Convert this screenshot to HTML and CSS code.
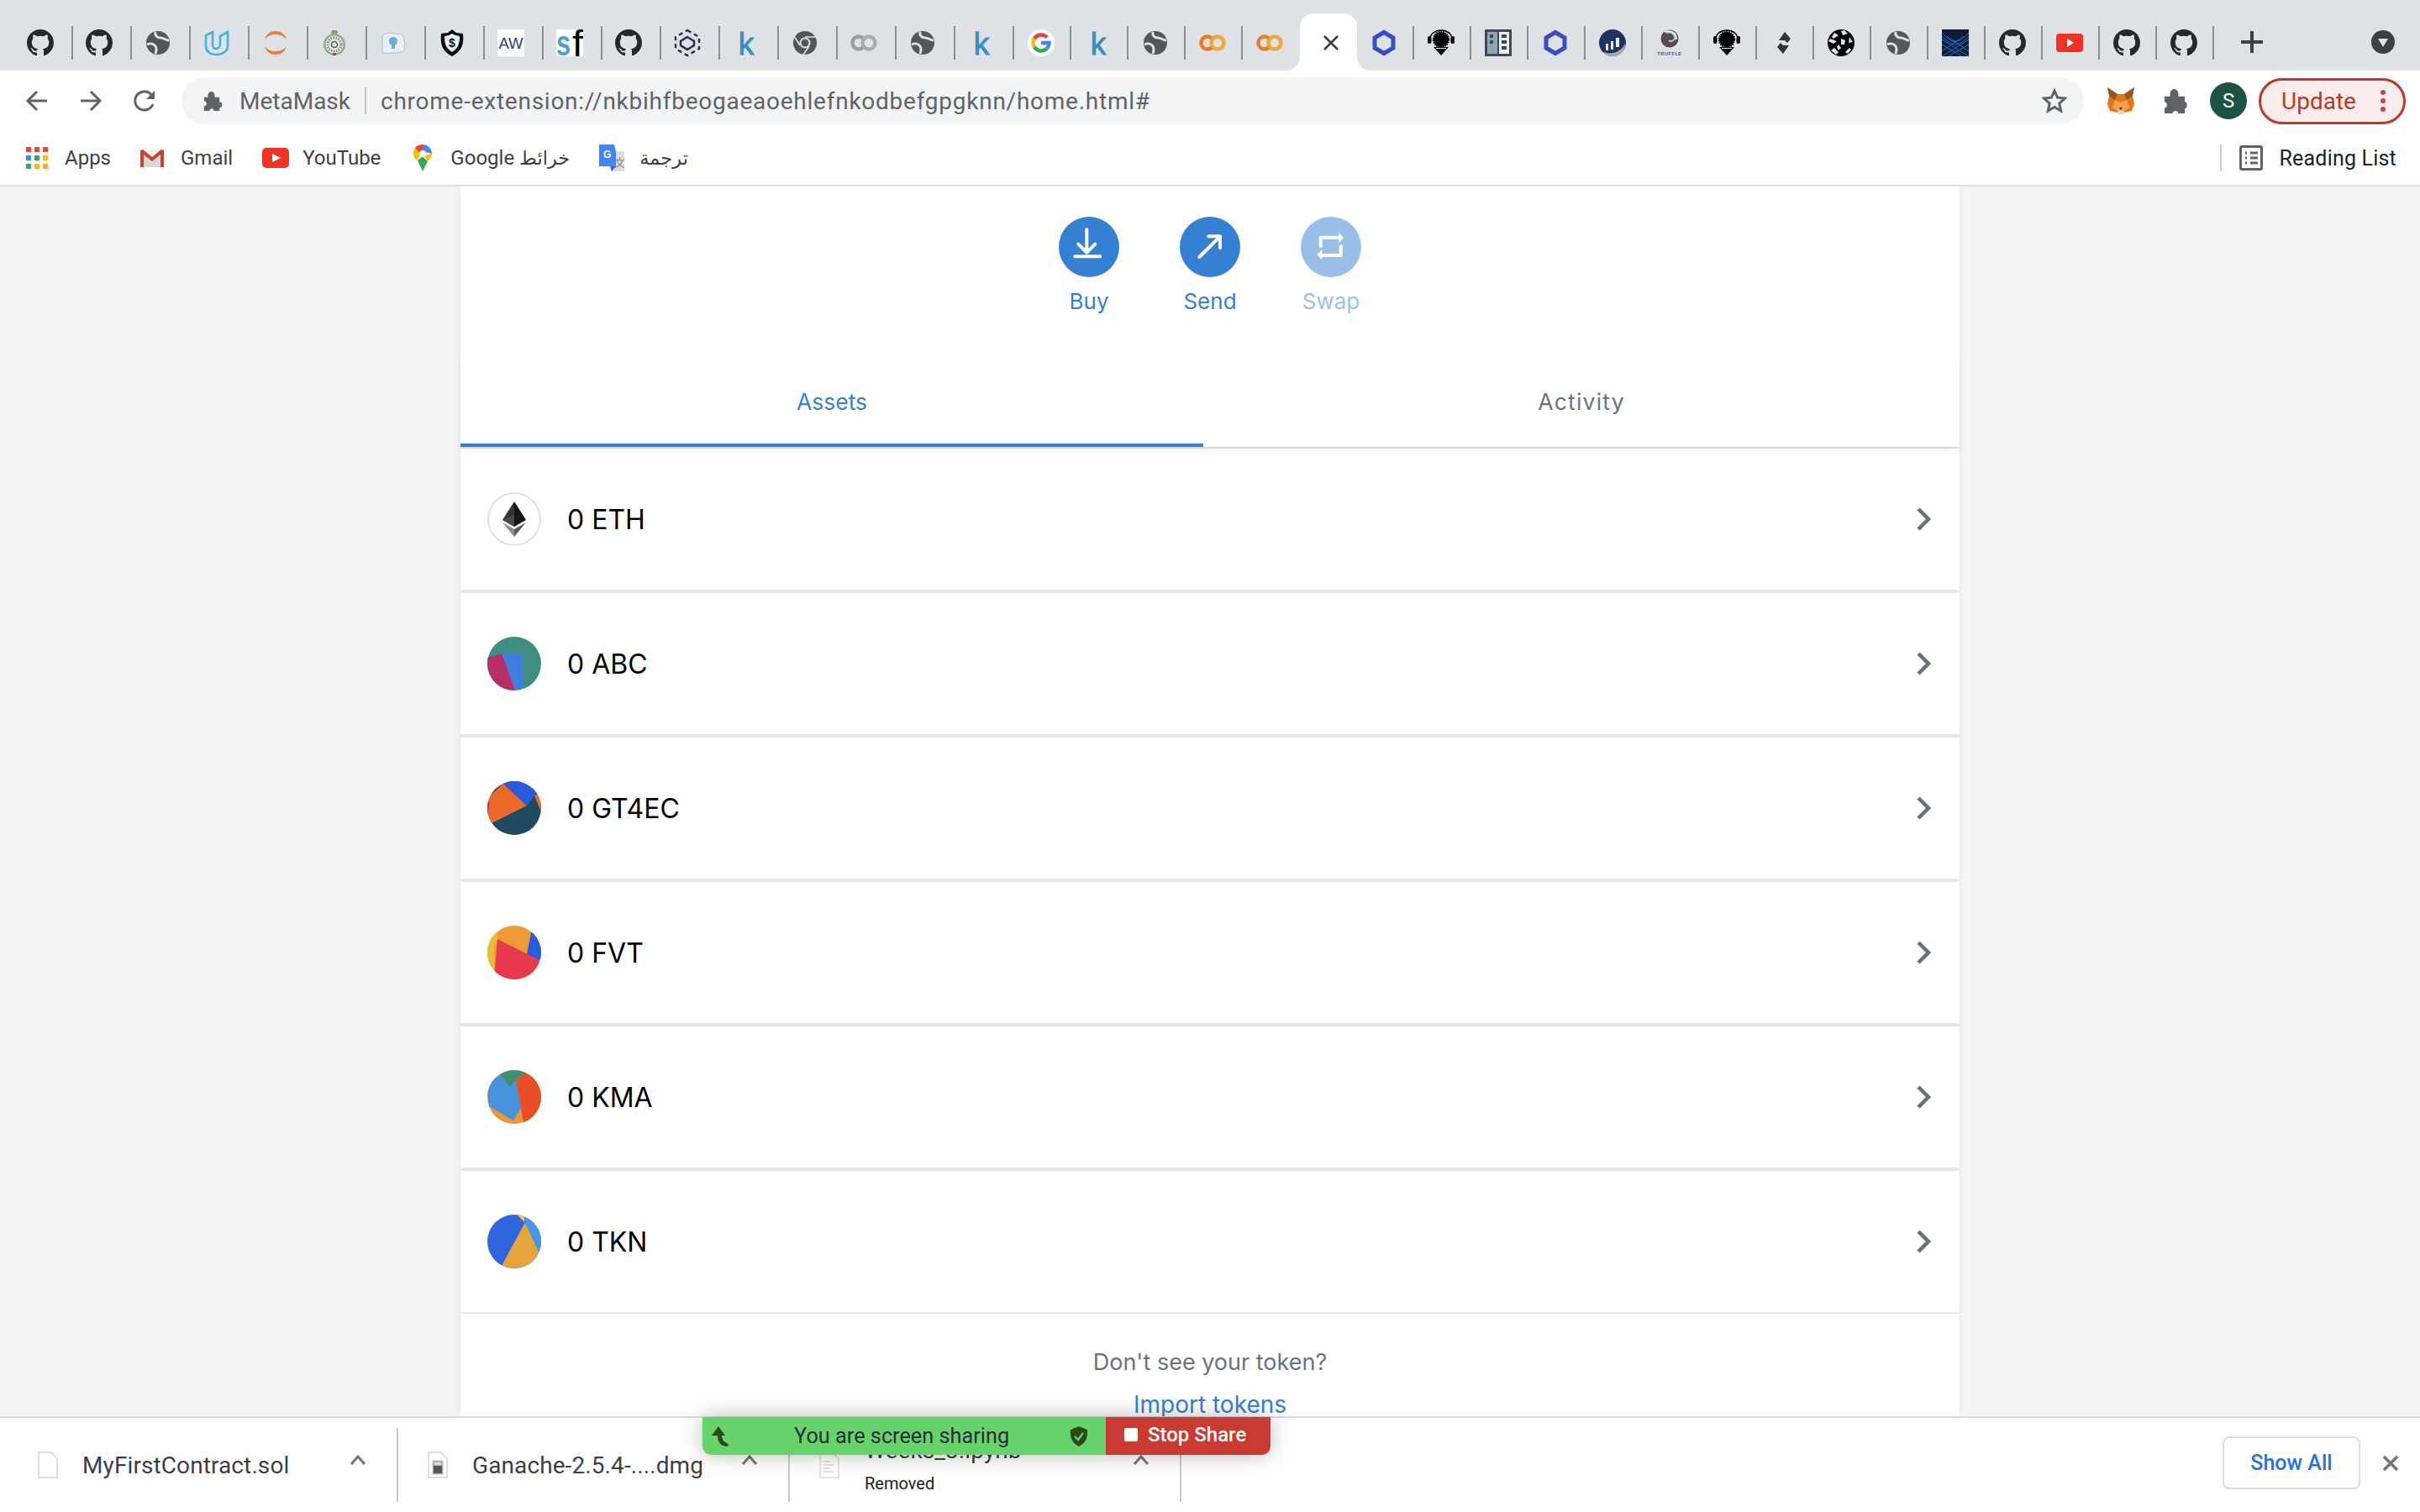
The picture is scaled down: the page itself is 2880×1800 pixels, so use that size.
FILE: index.html
```html
<!DOCTYPE html>
<html lang="en">
<head>
<meta charset="utf-8">
<title>MetaMask</title>
<link rel="stylesheet" href="styles.css">
</head>
<body>
<svg class="defs" width="0" height="0" aria-hidden="true">
  <symbol id="gh" viewBox="0 0 16 16"><path fill="#24292e" d="M8 0C3.58 0 0 3.58 0 8c0 3.54 2.29 6.53 5.47 7.59.4.07.55-.17.55-.38 0-.19-.01-.82-.01-1.49-2.01.37-2.53-.49-2.69-.94-.09-.23-.48-.94-.82-1.13-.28-.15-.68-.52-.01-.53.63-.01 1.08.58 1.23.82.72 1.21 1.87.87 2.33.66.07-.52.28-.87.51-1.07-1.78-.2-3.64-.89-3.64-3.95 0-.87.31-1.59.82-2.15-.08-.2-.36-1.02.08-2.12 0 0 .67-.21 2.2.82.64-.18 1.32-.27 2-.27s1.36.09 2 .27c1.53-1.04 2.2-.82 2.2-.82.44 1.1.16 1.92.08 2.12.51.56.82 1.27.82 2.15 0 3.07-1.87 3.75-3.65 3.95.29.25.54.73.54 1.48 0 1.07-.01 1.93-.01 2.2 0 .21.15.46.55.38A8.013 8.013 0 0 0 16 8c0-4.42-3.58-8-8-8z"/></symbol>
  <symbol id="globe" viewBox="0 0 32 32"><circle cx="16" cy="16" r="14" fill="#53565b"/><path fill="none" stroke="#dee1e6" stroke-width="3" d="M13 3c-1 4 2 7 6 7 4 0 6 3 10 3M3 18c4-2 8-1 10 2 2 3 1 6 0 9"/></symbol>
  <symbol id="udacity" viewBox="0 0 32 32"><path fill="none" stroke="#3fb3e5" stroke-width="2.6" d="M3 7v13c0 6 5 10 12 10 8 0 14-4 14-10V3l-9 5v10c0 3-3 5-5 5s-4-2-4-5V3z"/></symbol>
  <symbol id="arcs" viewBox="0 0 32 32"><path fill="#e8813a" d="M3 12C5 5 10 2 16 2s11 3 13 10c-3-4-8-6-13-6S6 8 3 12zM3 20c2 7 7 10 13 10s11-3 13-10c-3 4-8 6-13 6S6 24 3 20z"/></symbol>
  <symbol id="seal" viewBox="0 0 32 32"><circle cx="16" cy="18" r="13" fill="#8fae8f"/><circle cx="16" cy="18" r="10.500" fill="#e8e9e4"/><circle cx="16" cy="18" r="8" fill="none" stroke="#7d8a74" stroke-width="3" stroke-dasharray="1.500 1.500"/><circle cx="16" cy="18" r="3.500" fill="#fff" stroke="#2f6d40" stroke-width="1.600"/><path fill="#b28f4e" d="M13 1h6l1 4h-8z"/><path fill="#b0453f" d="M14 28h4v3h-4z"/></symbol>
  <symbol id="bulb" viewBox="0 0 32 32"><path fill="#e9eef2" stroke="#9cc1d8" stroke-width="1" d="M3 7c4-2 6-3 10-3s8 3 12 1l4 5c-1 4 2 6 0 10 1 4 0 6-2 7-5-1-8 2-12 1-4 0-7 1-12 0-1-4 1-6 0-10C2 14 4 11 3 7z"/><circle cx="16" cy="14" r="5" fill="#6fa9d8"/><path fill="#6fa9d8" d="M14 18h4v5h-4z"/></symbol>
  <symbol id="hexdots" viewBox="0 0 32 32"><path fill="none" stroke="#2d2a4d" stroke-width="2.4" d="M16 9l8 5v5l-8 5-8-5v-5z"/><path fill="none" stroke="#2d2a4d" stroke-width="2.4" stroke-dasharray="5 4" d="M16 1l14 8v14l-14 8L2 23V9z"/></symbol>
  <symbol id="chrome" viewBox="0 0 32 32"><circle cx="16" cy="16" r="14" fill="#53565b"/><circle cx="16" cy="16" r="6.5" fill="#dee1e6"/><circle cx="16" cy="16" r="4.5" fill="#53565b"/><path fill="none" stroke="#dee1e6" stroke-width="1.6" d="M16 9h13M10 19L3 8M21 20l-7 10"/></symbol>
  <symbol id="cogray" viewBox="0 0 32 32"><path fill="none" stroke="#9b9ea2" stroke-width="4.400" d="M15 10.500a7.500 7.500 0 1 0 0 11"/><circle cx="22" cy="16" r="7.500" fill="none" stroke="#a8abaf" stroke-width="4.400"/></symbol>
  <symbol id="co" viewBox="0 0 32 32"><circle cx="22" cy="16" r="7.500" fill="none" stroke="#f0a83a" stroke-width="4.600"/><path fill="none" stroke="#e0812a" stroke-width="4.600" d="M15 10.500a7.500 7.500 0 1 0 0 11"/></symbol>
  <symbol id="google" viewBox="0 0 32 32"><circle cx="16" cy="16" r="16" fill="#fff"/><path fill="none" stroke="#ea4335" stroke-width="4.5" d="M23 9.5A9.5 9.5 0 0 0 8 11"/><path fill="none" stroke="#fbbc05" stroke-width="4.5" d="M8 11a9.5 9.5 0 0 0 0 10"/><path fill="none" stroke="#34a853" stroke-width="4.5" d="M8 21a9.5 9.5 0 0 0 15 1.5"/><path fill="none" stroke="#4285f4" stroke-width="4.5" d="M23 22.500a9.500 9.500 0 0 0 2.500-6.500H16"/></symbol>
  <symbol id="chain" viewBox="0 0 32 32"><path fill="none" stroke="#3a4bc4" stroke-width="5" d="M16 3.500l11 6.500v12l-11 6.500L5 22V10z"/></symbol>
  <symbol id="shark" viewBox="0 0 32 32"><circle cx="16" cy="12" r="9" fill="#000" stroke="#000" stroke-width="2.400" stroke-dasharray="1.600 1"/><path fill="none" stroke="#000" stroke-width="1.400" d="M3 12C3 5 9 1 16 1s13 4 13 11"/><rect x="0" y="8" width="4.500" height="9" rx="2"/><rect x="27.500" y="8" width="4.500" height="9" rx="2"/><path d="M7 21h18l-9 10z"/><path fill="none" stroke="#dee1e6" stroke-width="1" d="M10 22.500h12"/></symbol>
  <symbol id="book" viewBox="0 0 32 32"><rect width="32" height="32" fill="#3f4a54"/><rect x="3" y="3" width="12" height="26" fill="#8ea3b4"/><rect x="17" y="3" width="12" height="26" fill="#eef1f3"/><rect x="6" y="6" width="4" height="4" fill="#3f4a54"/><rect x="6" y="13" width="4" height="4" fill="#3f4a54"/><rect x="20" y="6" width="6" height="4" fill="#3f4a54"/><rect x="20" y="13" width="6" height="4" fill="#3f4a54"/><rect x="20" y="20" width="6" height="4" fill="#3f4a54"/></symbol>
  <symbol id="bars" viewBox="0 0 32 32"><circle cx="16" cy="16" r="16" fill="#1f3560"/><path fill="#a9a9a9" d="M4 26c8 5 22 2 27-9 1 8-6 15-15 15-5 0-9-2-12-6z"/><path fill="#e8ecf3" d="M8 17h3v8H8zM14 14h3v10h-3zM20 10h4v11h-4z"/></symbol>
  <symbol id="sarrows" viewBox="0 0 32 32"><path fill="#333" d="M17 3l7 8-4 5-3-3h-7zM15 29l-7-8 4-5 3 3h7z"/></symbol>
  <symbol id="ball" viewBox="0 0 32 32"><circle cx="16" cy="16" r="16" fill="#000"/><g fill="#dee1e6"><path d="M8 4l5 3-6 4-2-2zM20 1l4 4-6 2-2-5zM26 9l4 6-5 1zM11 14l-4 3-6-3 2-3zM8 22l5 5-3 3-6-5zM21 27l5-5 2 2-4 5zM16 11l5 2-1 5-4 0zM13 18l3 4-3 3-2-4z"/></g></symbol>
  <symbol id="lines" viewBox="0 0 32 32"><rect width="32" height="32" fill="#0b1d33"/><path fill="none" stroke="#2b6bd8" stroke-width="1" d="M0 4c8 8 10 10 16 10s8-2 16-10M0 8c8 8 12 10 16 10s8-2 16-10M0 32L32 12M32 32L0 12M0 26L26 8M32 26L6 8M8 32L32 18M24 32L0 18"/></symbol>
  <symbol id="yt" viewBox="0 0 32 32"><rect y="5" width="32" height="22" rx="4" fill="#ee3224"/><path fill="#fff" d="M13 11l8 5-8 5z"/></symbol>
</svg>

<header class="tabstrip">
  <div class="tab wide"><svg class="ic"><use href="#gh"/></svg></div>
  <div class="tab wide"><svg class="ic"><use href="#gh"/></svg></div>
  <div class="tab wide"><svg class="ic"><use href="#globe"/></svg></div>
  <div class="tab wide"><svg class="ic"><use href="#udacity"/></svg></div>
  <div class="tab wide"><svg class="ic"><use href="#arcs"/></svg></div>
  <div class="tab wide"><svg class="ic"><use href="#seal"/></svg></div>
  <div class="tab wide"><svg class="ic"><use href="#bulb"/></svg></div>
  <div class="tab wide"><svg class="ic" viewBox="0 0 32 32"><path fill="#0b0b0b" d="M16 0l5 4 8 1c1 11 0 20-13 27C3 25 2 16 3 5l8-1z"/><path fill="#e9ebee" d="M16 5l4 2 5 1c0 8-1 14-9 19C8 22 7 16 7 8l5-1z"/><text class="svgt b" x="16" y="21" font-size="14" text-anchor="middle" fill="#0b0b0b">$</text></svg></div>
  <div class="tab wide"><svg class="ic" viewBox="0 0 32 32"><rect width="32" height="32" fill="#fff"/><text class="svgt" x="16" y="22.500" font-size="18.500" text-anchor="middle" fill="#1e3f82">AW</text></svg></div>
  <div class="tab wide"><svg class="ic" viewBox="0 0 32 32"><rect width="32" height="32" fill="#fff"/><text class="svgt b" x="0" y="31" font-size="42" textLength="17" lengthAdjust="spacingAndGlyphs" fill="#4a9fdb">s</text><text class="svgt" x="19" y="32" font-size="44" textLength="13" lengthAdjust="spacingAndGlyphs" fill="#000">f</text></svg></div>
  <div class="tab wide"><svg class="ic"><use href="#gh"/></svg></div>
  <div class="tab wide"><svg class="ic"><use href="#hexdots"/></svg></div>
  <div class="tab wide"><svg class="ic" viewBox="0 0 32 32"><text class="svgt letter-k" x="16" y="30" font-size="37" text-anchor="middle">k</text></svg></div>
  <div class="tab wide"><svg class="ic"><use href="#chrome"/></svg></div>
  <div class="tab wide"><svg class="ic"><use href="#cogray"/></svg></div>
  <div class="tab wide"><svg class="ic"><use href="#globe"/></svg></div>
  <div class="tab wide"><svg class="ic" viewBox="0 0 32 32"><text class="svgt letter-k" x="16" y="30" font-size="37" text-anchor="middle">k</text></svg></div>
  <div class="tab"><svg class="ic"><use href="#google"/></svg></div>
  <div class="tab"><svg class="ic" viewBox="0 0 32 32"><text class="svgt letter-k" x="16" y="30" font-size="37" text-anchor="middle">k</text></svg></div>
  <div class="tab"><svg class="ic"><use href="#globe"/></svg></div>
  <div class="tab"><svg class="ic"><use href="#co"/></svg></div>
  <div class="tab nosep"><svg class="ic"><use href="#co"/></svg></div>
  <div class="tab active"><svg class="close" viewBox="0 0 20 20"><path d="M2 2l16 16M18 2L2 18"/></svg></div>
  <div class="tab"><svg class="ic"><use href="#chain"/></svg></div>
  <div class="tab"><svg class="ic"><use href="#shark"/></svg></div>
  <div class="tab"><svg class="ic"><use href="#book"/></svg></div>
  <div class="tab"><svg class="ic"><use href="#chain"/></svg></div>
  <div class="tab"><svg class="ic"><use href="#bars"/></svg></div>
  <div class="tab"><svg class="ic" viewBox="0 0 32 32"><circle cx="16" cy="11" r="10.500" fill="#5b4a4c"/><path fill="none" stroke="#8fe3d6" stroke-width="2" d="M12 4c6-2 11 2 10 7-1 3-5 4-7 2"/><path fill="none" stroke="#fff" stroke-width="1.600" d="M10 3c8-3 15 2 14 9"/><text class="svgt b" x="16" y="30.500" font-size="5.500" letter-spacing=".6" text-anchor="middle" fill="#5b4a4c">TRUFFLE</text></svg></div>
  <div class="tab"><svg class="ic"><use href="#shark"/></svg></div>
  <div class="tab"><svg class="ic"><use href="#sarrows"/></svg></div>
  <div class="tab"><svg class="ic"><use href="#ball"/></svg></div>
  <div class="tab"><svg class="ic"><use href="#globe"/></svg></div>
  <div class="tab"><svg class="ic"><use href="#lines"/></svg></div>
  <div class="tab"><svg class="ic"><use href="#gh"/></svg></div>
  <div class="tab"><svg class="ic"><use href="#yt"/></svg></div>
  <div class="tab"><svg class="ic"><use href="#gh"/></svg></div>
  <div class="tab"><svg class="ic"><use href="#gh"/></svg></div>
  <svg class="plus" viewBox="0 0 26 26"><path d="M13 1v24M1 13h24"/></svg>
  <svg class="tabmenu" viewBox="0 0 28 28"><circle cx="14" cy="14" r="14" fill="#3c4043"/><path fill="#dee1e6" d="M8 10h12l-6 10z"/></svg>
</header>

<nav class="toolbar">
  <svg class="nav" viewBox="0 0 28 28"><path d="M26 14H3M14 3L3 14l11 11"/></svg>
  <svg class="nav" viewBox="0 0 28 28"><path d="M2 14h23M14 3l11 11-11 11"/></svg>
  <svg class="nav" viewBox="0 0 28 28"><path d="M24 18a11 11 0 1 1-1-10"/><path class="solid" d="M26 2v10H16z"/></svg>
  <div class="omnibox">
    <svg class="omni-puzzle" viewBox="0 0 26 26"><path d="M3 8h5c-1-5 2-7 4-7s5 2 4 7h6v6c5-1 4 8 0 7v4h-7c1-4-6-4-5 0H3v-6c4 1 4-7 0-6z"/></svg>
    <span class="omni-name">MetaMask</span>
    <span class="omni-sep"></span>
    <span class="omni-url">chrome-extension://nkbihfbeogaeaoehlefnkodbefgpgknn/home.html#</span>
    <svg class="star" viewBox="0 0 30 30"><path d="M15 3l3.600 8.200 8.900.9-6.700 6 1.900 8.800L15 22.400l-7.700 4.500 1.900-8.800-6.700-6 8.900-.9z"/></svg>
  </div>
  <svg class="fox" viewBox="0 0 32 32">
    <path fill="#e2761b" d="M0 0l12 8h8L32 0l-2 10 2 10-3 8-9 2-4 2-4-2-9-2-3-8 2-10z"/>
    <path fill="#8f5a2b" d="M0 0l12 8-3 7-7-5zM32 0L20 8l3 7 7-5z"/>
    <path fill="#f6a14c" d="M9 15l7 3 7-3 3 9-7 5h-6l-7-5z"/>
    <path fill="#e4d3c4" d="M12 28h8l-1 4h-6z"/><path fill="#233447" d="M14 24h4l-2 3z"/>
  </svg>
  <svg class="ext" viewBox="0 0 30 30"><path d="M2 9h7c-1-6 2-9 5-9s6 3 5 9h8v7c4-1 3 9 0 8v6h-8c0-4-7-4-7 0H2v-7c4 1 4-8 0-7z"/></svg>
  <div class="avatar">S</div>
  <div class="update"><span>Update</span><svg class="dots" viewBox="0 0 6 26"><circle cx="3" cy="3" r="3"/><circle cx="3" cy="13" r="3"/><circle cx="3" cy="23" r="3"/></svg></div>
</nav>

<div class="bookmarks">
  <div class="bm">
    <svg class="bm-ic apps" viewBox="0 0 26 26">
      <rect width="6" height="6" fill="#ea4335"/><rect x="10" width="6" height="6" fill="#ea4335"/><rect x="20" width="6" height="6" fill="#ea4335"/>
      <rect y="10" width="6" height="6" fill="#4285f4"/><rect x="10" y="10" width="6" height="6" fill="#34a853"/><rect x="20" y="10" width="6" height="6" fill="#fbbc05"/>
      <rect y="20" width="6" height="6" fill="#34a853"/><rect x="10" y="20" width="6" height="6" fill="#fbbc05"/><rect x="20" y="20" width="6" height="6" fill="#f2a93b"/>
    </svg><span>Apps</span>
  </div>
  <div class="bm">
    <svg class="bm-ic gmail" viewBox="0 0 28 22"><path fill="#eee" d="M3 1h22v21H3z"/><path fill="#d8d8d8" d="M14 13L25 4v18H3V4z"/><path fill="#c5432f" d="M0 2l3-1 11 9L25 1l3 1v20h-4V7L14 15 4 7v15H0z"/></svg><span>Gmail</span>
  </div>
  <div class="bm">
    <svg class="bm-ic yt" viewBox="0 0 32 24"><rect width="32" height="24" rx="5" fill="#ee3224"/><path fill="#fff" d="M12 7l10 5-10 5z"/></svg><span>YouTube</span>
  </div>
  <div class="bm">
    <svg class="bm-ic maps" viewBox="0 0 22 32"><path fill="#34a853" d="M5 19l6 13 6-12-6-6z"/><path fill="#fbbc05" d="M2 17C-1 12 0 7 2 4l6 7-3 8z"/><path fill="#ea4335" d="M2 4C4 1 8 0 11 0v7l-3 4z"/><path fill="#4285f4" d="M11 0c6 0 11 5 11 11l-8-2-3-2z"/><path fill="#fbbc05" d="M22 11c0 3-2 6-5 9l-4-7z"/><circle cx="11" cy="11" r="4" fill="#fff"/></svg><span>Google <span class="ar">خرائط</span></span>
  </div>
  <div class="bm">
    <svg class="bm-ic translate" viewBox="0 0 30 32"><path fill="#dcdcdc" d="M12 8h18v24H14z"/><path fill="#4285f4" d="M0 0h18l2 8v18H0z"/><path fill="#3367d6" d="M13 26h7l-5 6z"/><text class="svgt b" x="5" y="16" font-size="12" fill="#fff">G</text><text class="cjk" x="18" y="26" font-size="13" fill="#888">文</text></svg><span class="ar">ترجمة</span>
  </div>
  <div class="bm-right">
    <span class="bm-sep"></span>
    <svg class="list" viewBox="0 0 28 30"><rect x="1.500" y="1.500" width="25" height="27" rx="1.500"/><path d="M7 9h2M13 9h9M7 15h2M13 15h9M7 21h2M13 21h9"/></svg>
    <span class="reading">Reading List</span>
  </div>
</div>

<main class="content">
  <section class="card">
    <div class="actions">
      <div class="action">
        <svg class="action-ic" viewBox="0 0 72 72"><circle cx="36" cy="36" r="36"/><path d="M33.300 15.300v27M23.300 32.700l10 10 10-10M19.300 47.300h30"/></svg>
        <span>Buy</span>
      </div>
      <div class="action">
        <svg class="action-ic" viewBox="0 0 72 72"><circle cx="36" cy="36" r="36"/><path d="M23.300 48L48 23.300M34.300 23.300H48V37"/></svg>
        <span>Send</span>
      </div>
      <div class="action off">
        <svg class="action-ic" viewBox="0 0 72 72"><circle cx="36" cy="36" r="36"/><path d="M23.700 35.300V24.700H46M47.700 35.300V46H25"/><path class="fill" d="M45 18.700l6 6-6 6.600zM25.300 38.700l-6 6.600 6 6z"/></svg>
        <span>Swap</span>
      </div>
    </div>
    <div class="tabs">
      <div class="tabbtn on">Assets</div>
      <div class="tabbtn spaced">Activity</div>
    </div>
    <div class="row">
      <svg class="token eth" viewBox="0 0 64 64"><circle cx="32" cy="32" r="31" fill="#fff" stroke="#dedede" stroke-width="2"/><path fill="#343434" d="M32 11L18 33l14 8z"/><path fill="#141414" d="M32 11l14 22-14 8z"/><path fill="#4a4a4a" d="M18 33l14-6v14z"/><path fill="#8c8c8c" d="M18 36l14 8v9z"/><path fill="#5a5a5a" d="M46 36l-14 8v9z"/></svg>
      <span class="amount">0 ETH</span>
      <svg class="chev" viewBox="0 0 18 30"><path d="M3 3l12 12L3 27"/></svg>
    </div>
    <div class="row">
      <svg class="token" viewBox="0 0 64 64"><rect width="64" height="64" fill="#3e8d80"/><path fill="#3f7de0" d="M0 25l17-5 25-1 1 42-10 3z"/><path fill="#b72f66" d="M0 25l17-5 16 44H0z"/></svg>
      <span class="amount">0 ABC</span>
      <svg class="chev" viewBox="0 0 18 30"><path d="M3 3l12 12L3 27"/></svg>
    </div>
    <div class="row">
      <svg class="token" viewBox="0 0 64 64"><rect width="64" height="64" fill="#1f4a60"/><path fill="#ec6a29" d="M19 3l28 26L5 50 0 40V20z"/><path fill="#2c5ade" d="M19 3l15-6 26 15-13 17z"/><path fill="#ec6a29" d="M56 17l8-3v23z"/><path fill="#b72f56" d="M0 25h3l-3 14z"/></svg>
      <span class="amount">0 GT4EC</span>
      <svg class="chev" viewBox="0 0 18 30"><path d="M3 3l12 12L3 27"/></svg>
    </div>
    <div class="row">
      <svg class="token" viewBox="0 0 64 64"><rect width="64" height="64" fill="#ee9b37"/><path fill="#eabb3d" d="M0 0h12v16l-4 7v29H0z"/><path fill="#2c5ade" d="M52 8l12 0v33H62l-15-7z"/><path fill="#e83a4d" d="M12 16l50 25-2 23H8z"/></svg>
      <span class="amount">0 FVT</span>
      <svg class="chev" viewBox="0 0 18 30"><path d="M3 3l12 12L3 27"/></svg>
    </div>
    <div class="row">
      <svg class="token" viewBox="0 0 64 64"><rect width="64" height="64" fill="#ee9535"/><path fill="#3e8f76" d="M13 0h34v3L26 20 13 2z"/><path fill="#4793dc" d="M13 2l13 18 8-8 6 33-9 15L2 43 0 28V10z"/><path fill="#e84e25" d="M34 12L47 3l17 5v54H43z"/></svg>
      <span class="amount">0 KMA</span>
      <svg class="chev" viewBox="0 0 18 30"><path d="M3 3l12 12L3 27"/></svg>
    </div>
    <div class="row last">
      <svg class="token" viewBox="0 0 64 64"><rect width="64" height="64" fill="#3164dd"/><path fill="#e6a53a" d="M45 9l16 35 3 20H10l7-3z"/><path fill="#4796ea" d="M44 3h20v38l-3 3L45 9z"/><path fill="#f0c03a" d="M35 0h9v9z"/></svg>
      <span class="amount">0 TKN</span>
      <svg class="chev" viewBox="0 0 18 30"><path d="M3 3l12 12L3 27"/></svg>
    </div>
    <div class="foot">
      <div class="foot-q">Don't see your token?</div>
      <div class="foot-a">Import tokens</div>
    </div>
  </section>
</main>

<footer class="downloads">
  <div class="dl">
    <svg class="file" viewBox="0 0 24 32"><path d="M1 1h15l7 8v22H1z"/></svg>
    <span class="dl-name">MyFirstContract.sol</span>
    <svg class="caret" viewBox="0 0 20 12"><path d="M2 11l8-9 8 9"/></svg>
  </div>
  <div class="dl">
    <svg class="file" viewBox="0 0 24 32"><path d="M1 1h15l7 8v22H1z"/><rect x="6" y="11" width="12" height="16" fill="#555"/><rect x="8" y="13" width="8" height="3" fill="#ddd"/></svg>
    <span class="dl-name">Ganache-2.5.4-....dmg</span>
    <svg class="caret" viewBox="0 0 20 12"><path d="M2 11l8-9 8 9"/></svg>
  </div>
  <div class="dl">
    <svg class="file ghost" viewBox="0 0 24 32"><path d="M1 1h15l7 8v22H1z"/><path d="M5 12h8M5 16h12M5 20h8M5 24h12"/></svg>
    <div class="dl-stack">
      <span class="dl-name">Weeks_3.ipynb</span>
      <span class="dl-status">Removed</span>
    </div>
    <svg class="caret" viewBox="0 0 20 12"><path d="M2 11l8-9 8 9"/></svg>
  </div>
  <div class="dl-actions">
    <div class="showall">Show All</div>
    <svg class="dl-close" viewBox="0 0 20 20"><path d="M2 2l16 16M18 2L2 18"/></svg>
  </div>
</footer>

<aside class="share">
  <div class="share-green">
    <svg class="share-arrow" viewBox="0 0 24 24"><path fill="#2c4a17" d="M9 0l8 11h-4c0 5 3 8 8 10l-1 3c-8 0-12-5-12-13H1z"/></svg>
    <span class="share-text">You are screen sharing</span>
    <svg class="share-shield" viewBox="0 0 22 24"><path fill="#2c4a17" d="M11 0l10 4c1 9-2 16-10 20C3 20 0 13 1 4z"/><path fill="none" stroke="#66d46a" stroke-width="2.200" d="M6 12l4 4 6-8"/></svg>
  </div>
  <div class="share-red"><span class="share-stop"></span><span>Stop Share</span></div>
</aside>
</body>
</html>
```
FILE: styles.css
```css
* { box-sizing: border-box; }
html, body { margin: 0; padding: 0; }
body {
  width: 2880px;
  height: 1800px;
  overflow: hidden;
  position: relative;
  display: flex;
  flex-direction: column;
  background: #fff;
  font-family: Roboto, "DejaVu Sans", sans-serif;
  color: #3c4043;
}
.defs { position: absolute; }
.svgt { font-family: "Liberation Sans", sans-serif; }
.svgt.b { font-weight: 700; }
.cjk { font-family: "Noto Sans CJK SC", sans-serif; }
.letter-k { fill: #3c8dbc; stroke: #3c8dbc; stroke-width: .9; }
.ar { font-size: 22.5px; }

/* tab strip */
.tabstrip {
  height: 84px;
  flex: none;
  display: flex;
  align-items: flex-start;
  padding-left: 17px;
  background: #dee1e6;
}
.tab {
  position: relative;
  flex: none;
  width: 68px;
  height: 40px;
  margin-top: 31px;
  padding-left: 16px;
  display: flex;
  align-items: center;
  border-right: 2px solid #8e8f91;
}
.tab.wide { width: 70px; padding-left: 15px; }
.tab.nosep { border-right: 0; }
.ic { width: 32px; height: 32px; flex: none; }
.tab.active {
  height: 68px;
  margin-top: 16px;
  padding: 0 0 0 27px;
  background: #fff;
  border: 0;
  border-radius: 16px 16px 0 0;
  align-items: flex-start;
}
.tab.active::before, .tab.active::after {
  content: "";
  position: absolute;
  bottom: 0;
  width: 16px;
  height: 16px;
}
.tab.active::before { left: -16px; background: radial-gradient(circle at 0 0, #dee1e6 15.500px, #fff 16px); }
.tab.active::after { right: -16px; background: radial-gradient(circle at 100% 0, #dee1e6 15.500px, #fff 16px); }
.close { width: 20px; height: 20px; margin-top: 25px; fill: none; stroke: #3c4043; stroke-width: 2.600; }
.plus { width: 26px; height: 26px; margin: 37px 0 0 32px; fill: none; stroke: #3c4043; stroke-width: 4; stroke-linecap: round; }
.tabmenu { width: 28px; height: 28px; margin: 36px 30px 0 auto; }

/* toolbar */
.toolbar {
  height: 72px;
  flex: none;
  display: flex;
  align-items: center;
  padding: 0 17px 0 30px;
  gap: 0;
}
.nav { width: 28px; height: 28px; flex: none; margin-right: 36px; fill: none; stroke: #5f6368; stroke-width: 3; }
.nav .solid { fill: #5f6368; stroke: none; }
.nav:nth-of-type(3) { margin-right: 30px; }
.omnibox {
  flex: 1;
  height: 56px;
  display: flex;
  align-items: center;
  padding: 0 20px 0 24px;
  background: #f1f3f4;
  border-radius: 28px;
}
.omni-puzzle { width: 25px; height: 25px; fill: #5f6368; flex: none; }
.omni-name { margin-left: 20px; font-size: 28px; color: #5f6368; }
.omni-sep { width: 2px; height: 32px; margin: 0 17px; background: #c4c7ca; }
.omni-url { font-size: 28px; color: #5f6368; letter-spacing: .75px; }
.star { width: 30px; height: 30px; margin-left: auto; fill: none; stroke: #5f6368; stroke-width: 3; }
.fox { width: 32px; height: 32px; margin-left: 28px; flex: none; }
.ext { width: 29px; height: 29px; margin-left: 34px; flex: none; fill: #5f6368; }
.avatar {
  width: 44px;
  height: 44px;
  margin-left: 27px;
  flex: none;
  border-radius: 50%;
  background: #1e5244;
  color: #fff;
  font-size: 24px;
  display: flex;
  align-items: center;
  justify-content: center;
}
.update {
  width: 175px;
  height: 55px;
  margin-left: 14px;
  flex: none;
  display: flex;
  align-items: center;
  padding-left: 24px;
  border: 3px solid #b9392c;
  border-radius: 28px;
  background: #f9ecec;
  color: #b9392c;
  font-size: 28px;
}
.dots { width: 6px; height: 26px; margin-left: 29px; fill: #c5493c; }

/* bookmarks */
.bookmarks {
  height: 64px;
  flex: none;
  display: flex;
  align-items: center;
  padding: 0 28px 0 31px;
  font-size: 24px;
  color: #3c4043;
}
.bm { display: flex; align-items: center; gap: 18px; margin-right: 35px; }
.bm-ic { flex: none; }
.apps { width: 26px; height: 26px; margin-right: 2px; }
.gmail { width: 28px; height: 22px; margin-right: 2px; }
.yt { width: 32px; height: 24px; margin-right: -2px; }
.maps { width: 22px; height: 32px; margin: 0 4px; }
.translate { width: 30px; height: 32px; }
.bm-right { margin-left: auto; display: flex; align-items: center; }
.bm-sep { width: 2px; height: 32px; background: #c8cacc; }
.list { width: 28px; height: 30px; margin-left: 21px; fill: none; stroke: #5f6368; stroke-width: 3; }
.reading { margin-left: 19px; font-size: 25px; letter-spacing: .2px; color: #202124; }

/* page */
.content {
  flex: 1;
  min-height: 0;
  overflow: hidden;
  background: #f5f5f5;
  border-top: 2px solid #e0e0e0;
}
.card {
  width: 1784px;
  height: 100%;
  margin: 0 auto;
  background: #fff;
  box-shadow: 0 0 10px rgba(0, 0, 0, .07);
  font-family: Inter, sans-serif;
}
.actions {
  height: 202px;
  padding-top: 36px;
  display: flex;
  justify-content: center;
}
.action {
  width: 144px;
  display: flex;
  flex-direction: column;
  align-items: center;
  gap: 13px;
  color: #3580d2;
  font-size: 26px;
  line-height: 32px;
}
.action.off { opacity: .5; }
.action-ic { width: 72px; height: 72px; fill: #3580d2; }
.action-ic path { fill: none; stroke: #fff; stroke-width: 4; stroke-linecap: round; stroke-linejoin: round; }
.action-ic path.fill { fill: #fff; stroke: none; }
.tabs {
  display: flex;
  height: 110px;
  border-bottom: 2px solid #d9d9d9;
  box-shadow: 0 4px 8px rgba(0, 0, 0, .04);
  position: relative;
}
.tabbtn {
  flex: 1 1 900px;
  height: 108px;
  display: flex;
  align-items: center;
  justify-content: center;
  font-size: 26.500px;
  color: #6a737d;
}
.tabbtn.spaced { letter-spacing: 1.200px; }
.tabbtn.on { flex-basis: 884px; color: #3580d2; box-shadow: inset 0 -4px 0 #3580d2; }
.row {
  height: 172px;
  display: flex;
  align-items: center;
  padding: 0 34px 0 32px;
  border-bottom: 4px solid #e6e6e6;
}
.row.last { height: 170px; border-bottom-width: 2px; }
.token { width: 64px; height: 64px; flex: none; border-radius: 50%; }
.amount { margin-left: 31px; font-size: 32px; color: #000; }
.chev { width: 18px; height: 30px; margin-left: auto; fill: none; stroke: #6a737d; stroke-width: 4.500; }
.foot { padding-top: 40px; text-align: center; font-size: 27px; line-height: 36px; }
.foot-q { color: #6a737d; }
.foot-a { margin-top: 14px; color: #3580d2; font-size: 28px; }

/* downloads */
.downloads {
  height: 114px;
  flex: none;
  display: flex;
  align-items: flex-start;
  padding: 0 25px 0 10px;
  border-top: 2px solid #dadada;
  background: #fff;
}
.dl {
  height: 88px;
  margin-top: 12px;
  flex: none;
  width: 466px;
  display: flex;
  align-items: center;
  padding: 0 36px 0 35px;
  border-right: 2px solid #c9c9c9;
}
.dl:first-child { width: 464px; }
.file { width: 24px; height: 32px; flex: none; fill: #fff; stroke: #d4d4d4; stroke-width: 1.500; }
.file.ghost { opacity: .8; }
.dl-name { margin-left: 29px; font-size: 28px; letter-spacing: .1px; color: #3c4043; white-space: nowrap; }
.caret { width: 20px; height: 12px; margin: -12px 0 0 auto; flex: none; fill: none; stroke: #757575; stroke-width: 3; }
.dl-stack { display: flex; flex-direction: column; gap: 7px; margin-left: 30px; }
.dl-stack .dl-name { margin-left: 0; line-height: 36px; }
.dl-status { font-size: 20px; line-height: 28px; color: #202124; }
.dl-actions { margin: 22px 0 0 auto; height: 63px; display: flex; align-items: center; gap: 26px; }
.showall {
  width: 164px;
  height: 63px;
  border: 2px solid #dadce0;
  border-radius: 8px;
  display: flex;
  align-items: center;
  justify-content: center;
  color: #2a6fe0;
  font-size: 25px;
  font-weight: 500;
}
.dl-close { width: 20px; height: 20px; fill: none; stroke: #757575; stroke-width: 3.500; }

/* screen share overlay */
.share {
  position: absolute;
  left: 836px;
  top: 1687px;
  width: 676px;
  height: 45px;
  display: flex;
  border-radius: 0 0 10px 10px;
  overflow: hidden;
  font-size: 25.300px;
  box-shadow: 0 0 26px rgba(0, 0, 0, .28);
}
.share-green {
  width: 480px;
  display: flex;
  align-items: center;
  background: #66d46a;
  color: #2a2d3a;
  padding-left: 10px;
}
.share-arrow { width: 24px; height: 24px; flex: none; }
.share-text { margin-left: 75px; }
.share-shield { width: 22px; height: 24px; margin-left: auto; margin-right: 21px; flex: none; }
.share-red {
  flex: 1;
  display: flex;
  align-items: center;
  padding: 0 0 4px 22px;
  background: #c93a32;
  color: #fff;
  font-weight: 500;
  font-size: 24px;
}
.share-stop { width: 16px; height: 16px; margin-right: 12px; background: #fff; border-radius: 2px; }
```
